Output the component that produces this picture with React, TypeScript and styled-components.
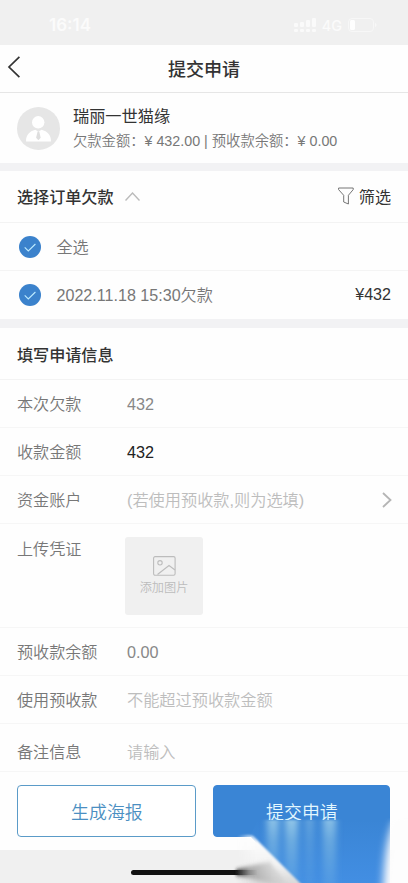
import React from 'react';
import styled, { createGlobalStyle } from 'styled-components';

const Global = createGlobalStyle`
  * { box-sizing: border-box; }
  body {
    margin: 0;
    background: #fff;
    color: #333;
    font-family: "Liberation Sans", "Noto Sans CJK SC", sans-serif;
    font-size: 16.1px;
    overflow: hidden;
  }
  button { font: inherit; padding: 0; border: 0; background: none; color: inherit; }
`;

const Screen = styled.div`
  position: relative;
  display: flex;
  flex-direction: column;
  width: 408px;
  height: 883px;
  overflow: hidden;
  background: #fefefe;
`;

const StatusBar = styled.div`
  display: flex;
  align-items: center;
  justify-content: space-between;
  height: 45px;
  padding: 5px 31px 0 49px;
  background: #f0f0f0;
  color: #fbfbfb;
  font: 600 17px Inter, sans-serif;
`;

const StatusIcons = styled.div`
  display: flex;
  align-items: center;
  gap: 6px;
  font: 500 14.5px Inter, sans-serif;
`;

const Header = styled.header`
  display: grid;
  grid-template-columns: 40px 1fr 40px;
  align-items: center;
  height: 48px;
  border-bottom: 1px solid #e6e6e6;
`;

const BackButton = styled.button`
  display: flex;
  padding: 0 0 4px 7px;
`;

const Title = styled.h1`
  margin: 0;
  padding-bottom: 2px;
  text-align: center;
  font-size: 18px;
  font-weight: 500;
`;

const Customer = styled.section`
  display: flex;
  align-items: center;
  gap: 13px;
  height: 70px;
  padding-left: 17px;
`;

const CustomerText = styled.div`
  display: flex;
  flex-direction: column;
  padding-top: 1px;
`;

const Name = styled.div`
  font-size: 16.2px;
  line-height: 25px;
`;

const Balance = styled.div`
  font-size: 14.3px;
  line-height: 24px;
  color: #777;
  font-weight: 350;
  white-space: pre;
`;

const Gap = styled.div<{ $size: number }>`
  height: ${(p) => p.$size}px;
  background: #f2f2f4;
`;

const SectionHead = styled.div<{ $lift?: number }>`
  display: flex;
  align-items: center;
  height: 52px;
  padding: 0 17px ${(p) => p.$lift ?? 0}px;
  border-bottom: 1px solid #f3f3f3;
`;

const SectionTitle = styled.h2`
  margin: 0 11px 0 0;
  font-size: 16.1px;
  font-weight: 500;
`;

const FilterButton = styled.button`
  display: flex;
  align-items: center;
  gap: 5px;
  margin-left: auto;
`;

const OrderRow = styled.div<{ $last?: boolean }>`
  display: flex;
  align-items: center;
  height: 48px;
  padding: 0 17px 0 19px;
  color: #777;
  border-bottom: ${(p) => (p.$last ? 0 : 1)}px solid #f4f4f4;
`;

const OrderLabel = styled.span`
  margin-left: 15.5px;
  padding-bottom: 2px;
  font-weight: 350;
`;

const Amount = styled.span`
  margin-left: auto;
  padding-bottom: 2px;
  color: #333;
`;

const FormRow = styled.div<{ $height?: number; $top?: boolean; $drop?: number }>`
  display: flex;
  align-items: ${(p) => (p.$top ? 'flex-start' : 'center')};
  height: ${(p) => p.$height ?? 48}px;
  padding: ${(p) => p.$drop ?? 1}px 16px 0 17px;
  border-bottom: 1px solid #f6f6f6;
`;

const Label = styled.label`
  width: 110px;
  line-height: 24px;
  color: #777;
  font-weight: 350;
`;

const Value = styled.span<{ $tone?: 'strong' | 'hint' }>`
  padding-bottom: ${(p) => (p.$tone === 'hint' ? 2 : 0)}px;
  font-weight: 350;
  font-size: 16.2px;
  color: ${(p) => (p.$tone === 'strong' ? '#222' : p.$tone === 'hint' ? '#bdbdbd' : '#888')};
`;

const Arrow = styled.svg`
  margin-left: auto;
`;

const Upload = styled.button`
  display: flex;
  flex-direction: column;
  align-items: center;
  width: 78px;
  height: 78px;
  margin-left: -2px;
  padding-top: 19px;
  border-radius: 3px;
  background: #f0f0f0;
  color: #bcbcbc;
  font-size: 12.2px;
  line-height: 25px;
  font-weight: 350;
`;

const Footer = styled.footer`
  display: flex;
  gap: 17px;
  height: 78px;
  padding: 13px 18px 0 17.4px;
`;

const Action = styled.button<{ $primary?: boolean }>`
  flex: ${(p) => (p.$primary ? '0 0 177px' : '0 0 179px')};
  height: 52px;
  padding-bottom: 1px;
  border: 1px solid ${(p) => (p.$primary ? '#3a85d5' : '#5b9bc8')};
  border-radius: 4px;
  background: ${(p) => (p.$primary ? '#3a85d5' : '#fff')};
  color: ${(p) => (p.$primary ? '#e4f8ff' : '#4b8fc2')};
  font-size: 17.9px;
  font-weight: 350;
`;

const HomeArea = styled.div`
  display: flex;
  justify-content: center;
  flex: 1;
  padding-top: 20px;
  background: #f0f0f0;
`;

const HomeIndicator = styled.div`
  width: 146px;
  height: 5px;
  border-radius: 3px;
  background: #111;
`;

const Smear = styled.svg`
  position: absolute;
  left: 228px;
  top: 815px;
`;

const Check = () => (
  <svg width="22" height="22" viewBox="0 0 22 22">
    <circle cx="11" cy="11" r="11" fill="#3b82cc" />
    <path d="M5.7 11.3 9.3 15 16.4 8" fill="none" stroke="#bdebff" strokeWidth="1.1" />
  </svg>
);

const streaks = [
  { x: 39, width: 12, opacity: 0.8 },
  { x: 57, width: 13, opacity: 0.85 },
  { x: 77, width: 9, opacity: 0.4 },
  { x: 95, width: 13, opacity: 0.75 },
];

export default function App() {
  return (
    <>
      <Global />
      <Screen>
        <StatusBar>
          <span>16:14</span>
          <StatusIcons>
            <svg width="22" height="15" viewBox="0 0 22 15" fill="#fafafa">
              <rect x="0" y="5" width="4" height="4" rx="1" />
              <rect x="6" y="4" width="4" height="5" rx="1" />
              <rect x="12" y="2" width="4" height="7" rx="1" />
              <rect x="18" y="0" width="4" height="9" rx="1" />
              <rect x="0" y="11" width="4" height="3" rx="1" />
              <rect x="6" y="11" width="4" height="3" rx="1" />
              <rect x="12" y="11" width="4" height="3" rx="1" />
              <rect x="18" y="11" width="4" height="3" rx="1" />
            </svg>
            <span>4G</span>
            <svg width="29" height="14" viewBox="0 0 29 14">
              <rect x="0.5" y="0.5" width="25" height="13" rx="3.5" fill="none" stroke="#f7f7f7" />
              <rect x="2" y="2" width="5" height="10" rx="1.5" fill="#fefefe" />
              <path d="M27 5c2 .5 2 3.500 0 4z" fill="#f8f8f8" />
            </svg>
          </StatusIcons>
        </StatusBar>

        <Header>
          <BackButton aria-label="返回">
            <svg width="14" height="22" viewBox="0 0 14 22" fill="none" stroke="#333" strokeWidth="1.7">
              <path d="M12.400 .8 2 11 12.400 21.200" />
            </svg>
          </BackButton>
          <Title>提交申请</Title>
        </Header>

        <Customer>
          <svg width="43" height="43" viewBox="0 0 43 43">
            <circle cx="21.500" cy="21.500" r="21.500" fill="#e6e6e6" />
            <circle cx="21.200" cy="15.300" r="6.200" fill="#fff" />
            <path d="M9 34.500c0-7 3.500-10 9.300-11.800l3.100 2 3.100-2C30.500 24.500 34 27.500 34 34.500z" fill="#fff" />
            <path d="m20.600 24.500-1.500 6.300 2.300 2.400 2.300-2.400-1.500-6.300z" fill="#dedede" />
          </svg>
          <CustomerText>
            <Name>瑞丽一世猫缘</Name>
            <Balance>欠款金额：¥ 432.00 | 预收款余额：¥ 0.00</Balance>
          </CustomerText>
        </Customer>
        <Gap $size={8} />

        <SectionHead $lift={1}>
          <SectionTitle>选择订单欠款</SectionTitle>
          <svg width="15" height="9" viewBox="0 0 15 9" fill="none" stroke="#bbb" strokeWidth="1.4">
            <path d="M.5 8.500 7.500 1l7 7.500" />
          </svg>
          <FilterButton>
            <svg width="16" height="18" viewBox="0 0 16 18" fill="none" stroke="#666" strokeWidth="0.9" strokeLinejoin="round">
              <path d="M.6 1h14.600v1.600l-4.800 5.700V17l-4.700-2V8.300L.6 2.600z" />
            </svg>
            筛选
          </FilterButton>
        </SectionHead>
        <OrderRow>
          <Check />
          <OrderLabel>全选</OrderLabel>
        </OrderRow>
        <OrderRow $last>
          <Check />
          <OrderLabel>2022.11.18 15:30欠款</OrderLabel>
          <Amount>¥432</Amount>
        </OrderRow>
        <Gap $size={9} />

        <SectionHead>
          <SectionTitle>填写申请信息</SectionTitle>
        </SectionHead>
        <FormRow>
          <Label>本次欠款</Label>
          <Value>432</Value>
        </FormRow>
        <FormRow>
          <Label>收款金额</Label>
          <Value $tone="strong">432</Value>
        </FormRow>
        <FormRow>
          <Label>资金账户</Label>
          <Value $tone="hint">(若使用预收款,则为选填)</Value>
          <Arrow width="10" height="16" viewBox="0 0 10 16" fill="none" stroke="#b5b5b5" strokeWidth="1.8">
            <path d="m1 1 7.500 7L1 15" />
          </Arrow>
        </FormRow>
        <FormRow $height={104} $top $drop={13}>
          <Label>上传凭证</Label>
          <Upload>
            <svg width="23" height="20" viewBox="0 0 23 20" fill="none" stroke="#bcbcbc" strokeWidth="1.1">
              <rect x=".6" y=".6" width="21.500" height="18.600" rx="1.500" />
              <circle cx="7" cy="6.800" r="2.200" />
              <path d="m4.500 18.500 11.500-9 6 4.500" />
            </svg>
            添加图片
          </Upload>
        </FormRow>
        <FormRow>
          <Label>预收款余额</Label>
          <Value>0.00</Value>
        </FormRow>
        <FormRow>
          <Label>使用预收款</Label>
          <Value $tone="hint">不能超过预收款金额</Value>
        </FormRow>
        <FormRow $drop={9}>
          <Label>备注信息</Label>
          <Value $tone="hint">请输入</Value>
        </FormRow>

        <Footer>
          <Action>生成海报</Action>
          <Action $primary>提交申请</Action>
        </Footer>
        <HomeArea>
          <HomeIndicator />
        </HomeArea>

        <Smear width="180" height="68" viewBox="0 0 180 68">
          <defs>
            <linearGradient id="blue" x1="0" y1="0" x2="0" y2="1">
              <stop offset="0" stopColor="#3a85d5" />
              <stop offset="1" stopColor="#438fe4" />
            </linearGradient>
            <linearGradient id="streak" x1="0" y1="0" x2="0" y2="1">
              <stop offset="0" stopColor="#b4e0f0" stopOpacity=".85" />
              <stop offset=".3" stopColor="#88c0e4" stopOpacity=".75" />
              <stop offset="1" stopColor="#62a8e4" stopOpacity=".45" />
            </linearGradient>
            <linearGradient id="fold" x1="0" y1="0" x2="0" y2="1">
              <stop offset="0" stopColor="#fff" />
              <stop offset=".55" stopColor="#f2f2f2" />
              <stop offset="1" stopColor="#cfcfcf" />
            </linearGradient>
            <linearGradient id="foldFade" x1="0" y1="0" x2="1" y2="0">
              <stop offset="0" stopColor="#fff" stopOpacity="0" />
              <stop offset=".3" stopColor="#fff" />
            </linearGradient>
            <mask id="foldMask">
              <rect x="8" y="0" width="72" height="68" fill="url(#foldFade)" />
            </mask>
            <linearGradient id="ink" x1="0" y1="0" x2="1" y2="0">
              <stop offset="0" stopColor="#111" />
              <stop offset=".25" stopColor="#888" stopOpacity=".7" />
              <stop offset="1" stopColor="#bbb" stopOpacity=".05" />
            </linearGradient>
            <filter id="soft" x="-50%" y="-20%" width="200%" height="140%">
              <feGaussianBlur stdDeviation="3 1" />
            </filter>
            <filter id="edgeWide" x="-80%" y="-20%" width="260%" height="140%">
              <feGaussianBlur stdDeviation="4 2" />
            </filter>
            <filter id="inkSoft" x="-20%" y="-40%" width="140%" height="180%">
              <feGaussianBlur stdDeviation="1.5 2" />
            </filter>
            <filter id="edge" x="-20%" y="-20%" width="140%" height="140%">
              <feGaussianBlur stdDeviation="1" />
            </filter>
            <clipPath id="below">
              <rect y="3" width="180" height="65" />
            </clipPath>
          </defs>
          <g clipPath="url(#below)">
            <path d="M22 21 30 5h132v68H72z" fill="url(#blue)" />
            <g filter="url(#soft)">
              {streaks.map((s) => (
                <rect key={s.x} x={s.x} y="5" width={s.width} height="72" fill="url(#streak)" opacity={s.opacity} />
              ))}
            </g>
            <path d="M167 5c-8 15-11 40-12 78h55V5z" fill="#fdfdfd" filter="url(#edgeWide)" />
            <path d="M8 22c4-2 12-3 17-1l54 54H8z" fill="url(#fold)" mask="url(#foldMask)" filter="url(#edge)" />
            <path d="M8 55c12-3 20-6 34-8l20 24c-20-1-38-8-54-11z" fill="url(#ink)" filter="url(#inkSoft)" />
          </g>
        </Smear>
      </Screen>
    </>
  );
}
